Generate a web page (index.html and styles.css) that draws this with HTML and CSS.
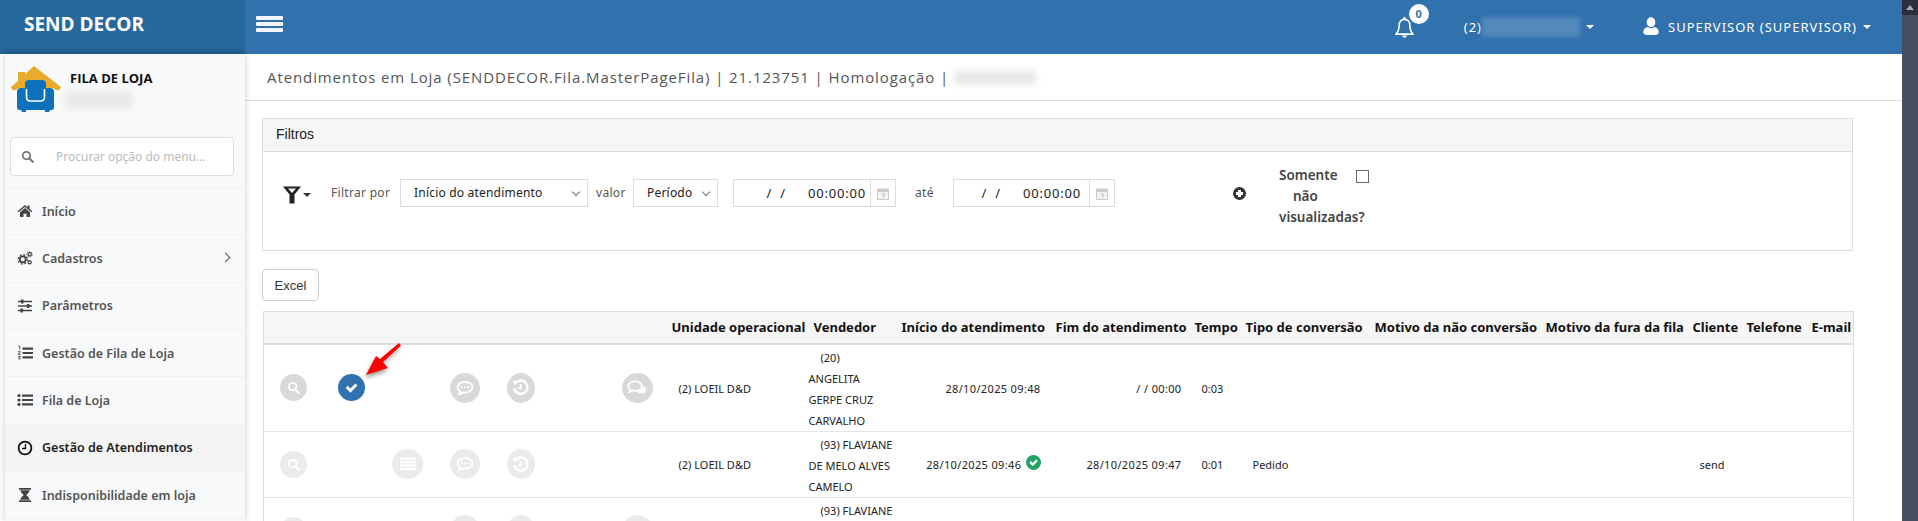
FILE: index.html
```html
<!DOCTYPE html>
<html lang="pt-BR">
<head>
<meta charset="utf-8">
<title>Atendimentos em Loja</title>
<link rel="stylesheet" href="styles.css">
</head>
<body>
<svg class="defs" width="0" height="0" aria-hidden="true">
  <symbol id="i-search" viewBox="0 0 16 16"><circle cx="6.8" cy="6.8" r="4.6" fill="none" stroke="currentColor" stroke-width="2.2"/><path d="M10.2 10.2L14.4 14.4" stroke="currentColor" stroke-width="2.8" stroke-linecap="round"/></symbol>
  <symbol id="i-check" viewBox="0 0 16 16"><path d="M1.800 8.400l2.200-2.200 2.900 2.900 5.200-5.400 2.200 2.200-7.400 7.600z" fill="currentColor"/></symbol>
  <symbol id="i-list" viewBox="0 0 16 16"><path d="M0 1.500h16v2.500H0zM0 4.900h16v2.500H0zM0 8.300h16v2.500H0zM0 11.700h16v2.500H0z" fill="currentColor"/><path d="M4.500 1.500v12.700" stroke="#ebebeb" stroke-width=".8"/></symbol>
  <symbol id="i-chat" viewBox="0 0 18 16"><path d="M9 2C4.800 2 1.600 4.400 1.600 7.300c0 1.800 1.200 3.300 3 4.300-.2 1-.8 1.900-1.400 2.600 1.500-.2 2.900-.9 3.900-1.800.6.1 1.200.2 1.900.2 4.200 0 7.400-2.400 7.400-5.300S13.200 2 9 2z" fill="none" stroke="currentColor" stroke-width="1.800"/><circle cx="5.800" cy="7.300" r="1.100" fill="currentColor"/><circle cx="9" cy="7.300" r="1.100" fill="currentColor"/><circle cx="12.200" cy="7.300" r="1.100" fill="currentColor"/></symbol>
  <symbol id="i-history" viewBox="0 0 16 16"><path d="M3.300 3.800A6.300 6.300 0 1 1 2 8.700" fill="none" stroke="currentColor" stroke-width="2.200"/><path d="M1 1.600l5 .4-3.800 4.200z" fill="currentColor"/><path d="M8.300 4.800v4H5.500" fill="none" stroke="currentColor" stroke-width="1.800"/></symbol>
  <symbol id="i-comments" viewBox="0 0 18 16"><path d="M7.200 2C3.800 2 1 3.900 1 6.300c0 1.300.8 2.500 2.100 3.300-.2.700-.5 1.300-1 1.800 1.100-.2 2-.6 2.800-1.200.7.200 1.500.3 2.300.3 3.400 0 6.200-1.900 6.200-4.200S10.600 2 7.200 2z" fill="none" stroke="currentColor" stroke-width="1.600"/><path d="M15 6c1.300.8 2.200 2 2.200 3.400 0 1.100-.6 2-1.600 2.700.1.500.4 1.100.8 1.500-.9-.1-1.700-.5-2.400-1-.5.100-1.100.2-1.700.2-1.700 0-3.300-.6-4.200-1.600 3.800-.1 6.400-2.300 6.900-5.200z" fill="currentColor"/></symbol>
  <symbol id="i-home" viewBox="0 0 16 16"><path d="M8 2L.6 8.200l.9 1.100L8 3.900l6.500 5.400.9-1.100-2.800-2.400V2.500h-2v2.100z" fill="currentColor"/><path d="M3 9.300L8 5.100l5 4.200v4.700H9.500v-3.200h-3V14H3z" fill="currentColor"/></symbol>
  <symbol id="i-cogs" viewBox="0 0 18 16"><circle cx="6.500" cy="9.500" r="3.400" fill="none" stroke="currentColor" stroke-width="2"/><circle cx="6.500" cy="9.500" r="5.200" fill="none" stroke="currentColor" stroke-width="1.600" stroke-dasharray="2 2.100"/><circle cx="14.200" cy="3.800" r="1.800" fill="none" stroke="currentColor" stroke-width="1.400"/><circle cx="14.200" cy="3.800" r="3" fill="none" stroke="currentColor" stroke-width="1.100" stroke-dasharray="1.300 1.300"/><circle cx="14.200" cy="12.800" r="1.800" fill="none" stroke="currentColor" stroke-width="1.400"/></symbol>
  <symbol id="i-sliders" viewBox="0 0 16 16"><path d="M1 3.500h14M1 8h14M1 12.500h14" stroke="currentColor" stroke-width="1.300"/><path d="M4 1.500h2.500v4H4zM10 6h2.500v4H10zM3.500 10.500H6v4H3.500z" fill="currentColor"/></symbol>
  <symbol id="i-list-ol" viewBox="0 0 16 16"><path d="M5.500 2.500H16v2.200H5.500zM5.500 6.900H16v2.200H5.500zM5.500 11.300H16v2.200H5.500z" fill="currentColor"/><path d="M1.300 1.200h1.500v3.400M1 6.700h2.400L1.200 9.400h2.500M1 11.600h2.500l-1 1 1 1.200H1" fill="none" stroke="currentColor" stroke-width=".9"/></symbol>
  <symbol id="i-list-ul" viewBox="0 0 16 16"><path d="M5 2.500h11v2.200H5zM5 6.900h11v2.200H5zM5 11.300h11v2.200H5z" fill="currentColor"/><circle cx="2" cy="3.600" r="1.600" fill="currentColor"/><circle cx="2" cy="8" r="1.600" fill="currentColor"/><circle cx="2" cy="12.400" r="1.600" fill="currentColor"/></symbol>
  <symbol id="i-clock" viewBox="0 0 16 16"><circle cx="8" cy="8" r="6.400" fill="none" stroke="currentColor" stroke-width="1.800"/><path d="M8.500 3.800v4.700H5" fill="none" stroke="currentColor" stroke-width="1.400"/></symbol>
  <symbol id="i-hourglass" viewBox="0 0 16 16"><path d="M2 1h12v1.800H2zM2 13.200h12V15H2zM3.500 3.200h9C12.500 6 9.800 7 9.400 8c.4 1 3.100 2 3.100 4.800h-9C3.500 10 6.200 9 6.600 8c-.4-1-3.100-2-3.100-4.800z" fill="currentColor"/></symbol>
  <symbol id="i-bell" viewBox="0 0 22 24"><path d="M11 3.500c-3.600 0-5.600 2.700-5.600 6 0 5-1.300 7.500-3.400 9.500h18c-2.100-2-3.400-4.500-3.400-9.500 0-3.300-2-6-5.600-6z" fill="none" stroke="currentColor" stroke-width="1.700" stroke-linejoin="round"/><path d="M8.200 20.500a2.900 2.900 0 0 0 5.600 0z" fill="currentColor"/><circle cx="11" cy="2.500" r="1.500" fill="currentColor"/></symbol>
  <symbol id="i-user" viewBox="0 0 16 18"><ellipse cx="8" cy="5.200" rx="4.300" ry="5"/><path d="M.3 15c0-3 2.200-4.800 4.700-5 .9.800 1.900 1.200 3 1.200s2.100-.4 3-1.200c2.500.2 4.700 2 4.700 5 0 1.900-1.500 3-3.500 3H3.800C1.800 18 .3 16.900.3 15z"/></symbol>
  <symbol id="i-filter" viewBox="0 0 18 18"><path d="M0 .5h18l-6.500 8v9h-5v-9z" fill="currentColor"/><path d="M5 2.500h8L9 7z" fill="#fff"/></symbol>
  <symbol id="i-calendar" viewBox="0 0 12 13"><path d="M.5 2h11v10.500H.5z" fill="#f3f3f3" stroke="#ccc"/><path d="M.5 2h11v3H.5z" fill="#ccc"/><path d="M4.500 7h3l-1.500 4" fill="none" stroke="#bbb"/></symbol>
</svg>

<div class="screen">
  <div class="page">
    <header class="topbar">
      <div class="brand">SEND DECOR</div>
      <div class="burger"><i></i><i></i><i></i></div>
      <div class="top-right">
        <div class="bell"><svg class="bell-ico"><use href="#i-bell"/></svg><span class="badge">0</span></div>
        <div class="unit">(2)<span class="blur-top"></span><b class="caret"></b></div>
        <div class="user"><svg class="user-ico" fill="currentColor"><use href="#i-user"/></svg>SUPERVISOR (SUPERVISOR)<b class="caret"></b></div>
      </div>
    </header>
    <div class="content">
      <aside class="sidebar">
        <div class="profile">
          <svg class="logo" viewBox="0 0 50 50">
            <path d="M23 2L50 23Q49 27 45 26L42 24H8L5 26Q1 27 0 23L7 17V8H14V10Z" fill="#e8ab2b"/>
            <rect x="6" y="24" width="10" height="22" rx="4" fill="#0d72b9"/>
            <rect x="32" y="24" width="11" height="22" rx="4" fill="#0d72b9"/>
            <rect x="6" y="36" width="37" height="10" rx="3" fill="#0d72b9"/>
            <path d="M10 46h5v2h-4zM34 46h5l-1 2h-4z" fill="#0d72b9"/>
            <rect x="14" y="16" width="21" height="20" rx="4" fill="#0d72b9"/>
            <path d="M15.500 25v8q0 4 4 4h10q4 0 4-4v-8" fill="none" stroke="#fff" stroke-width="1.600"/>
          </svg>
          <div class="profile-text">
            <div class="profile-title">FILA DE LOJA</div>
            <div class="blur-side"></div>
          </div>
        </div>
        <div class="search"><svg class="search-ico"><use href="#i-search"/></svg><span class="search-ph">Procurar opção do menu...</span></div>
        <nav class="menu">
          <a class="item"><svg class="mi"><use href="#i-home"/></svg>Início</a>
          <a class="item"><svg class="mi"><use href="#i-cogs"/></svg>Cadastros<span class="chev"></span></a>
          <a class="item"><svg class="mi"><use href="#i-sliders"/></svg>Parâmetros</a>
          <a class="item"><svg class="mi"><use href="#i-list-ol"/></svg>Gestão de Fila de Loja</a>
          <a class="item"><svg class="mi"><use href="#i-list-ul"/></svg>Fila de Loja</a>
          <a class="item active"><svg class="mi"><use href="#i-clock"/></svg>Gestão de Atendimentos</a>
          <a class="item"><svg class="mi"><use href="#i-hourglass"/></svg>Indisponibilidade em loja</a>
        </nav>
      </aside>
      <main class="main">
        <div class="title">Atendimentos em Loja (SENDDECOR.Fila.MasterPageFila) | 21.123751 | Homologação | <span class="blur-title"></span></div>
        <div class="body">
          <section class="panel">
            <div class="panel-head">Filtros</div>
            <div class="panel-body">
              <span class="funnel"><svg class="funnel-ico"><use href="#i-filter"/></svg><b class="caret dark"></b></span>
              <label class="lbl l-filtrar">Filtrar por</label>
              <div class="sel s-campo">Início do atendimento<span class="sel-chev"></span></div>
              <label class="lbl l-valor">valor</label>
              <div class="sel s-periodo">Período<span class="sel-chev"></span></div>
              <div class="date d-1"><span class="date-val"><span class="slashes">/&nbsp;&nbsp;/</span>00:00:00</span><span class="addon"><svg class="cal"><use href="#i-calendar"/></svg></span></div>
              <label class="lbl l-ate">até</label>
              <div class="date d-2"><span class="date-val"><span class="slashes">/&nbsp;&nbsp;/</span>00:00:00</span><span class="addon"><svg class="cal"><use href="#i-calendar"/></svg></span></div>
              <span class="plus"></span>
              <div class="only">
                <div class="only-text"><span class="ind">Somente</span><br><span class="ind2">não</span><br>visualizadas?</div>
                <span class="checkbox"></span>
              </div>
            </div>
          </section>
          <button class="excel">Excel</button>
          <div class="table-wrap">
            <table class="grid">
              <colgroup>
                <col class="c-a"><col class="c-b"><col class="c-c"><col class="c-d"><col class="c-e"><col class="c-f"><col class="c-g">
                <col class="c-un"><col class="c-ve"><col class="c-in"><col class="c-fi"><col class="c-te"><col class="c-ti"><col class="c-mo"><col class="c-fu"><col class="c-cl"><col class="c-fo"><col class="c-em">
              </colgroup>
              <thead>
                <tr><th></th><th></th><th></th><th></th><th></th><th></th><th></th>
                  <th>Unidade operacional</th><th class="th-ve">Vendedor</th><th>Início do atendimento</th><th>Fim do atendimento</th><th>Tempo</th><th>Tipo de conversão</th><th>Motivo da não conversão</th><th>Motivo da fura da fila</th><th>Cliente</th><th>Telefone</th><th>E-mail</th></tr>
              </thead>
              <tbody>
                <tr class="r-1">
                  <td class="ic"><span class="cb c27"><svg class="g13"><use href="#i-search"/></svg></span></td>
                  <td class="ic"><span class="cb c27 blue"><svg class="g15"><use href="#i-check"/></svg></span>
                    <svg class="arrow" viewBox="0 0 44 40"><path d="M39 1L41 3.500 23 20 28 26 6 33 16 14 20 17z" fill="#f00"/></svg></td>
                  <td class="ic"></td>
                  <td class="ic"><span class="cb c30"><svg class="g18"><use href="#i-chat"/></svg></span></td>
                  <td class="ic"><span class="cb c29"><svg class="g17"><use href="#i-history"/></svg></span></td>
                  <td class="ic"></td>
                  <td class="ic"><span class="cb c31"><svg class="g20"><use href="#i-comments"/></svg></span></td>
                  <td class="pl">(2) LOEIL D&amp;D</td>
                  <td class="ven">(20)<br>ANGELITA<br>GERPE CRUZ<br>CARVALHO</td>
                  <td class="rt">28/10/2025 09:48</td>
                  <td class="rt rt2">/ / 00:00</td>
                  <td class="pl2">0:03</td>
                  <td class="pl2"></td><td></td><td></td><td></td><td></td><td></td>
                </tr>
                <tr class="r-2">
                  <td class="ic"><span class="cb c27"><svg class="g13"><use href="#i-search"/></svg></span></td>
                  <td class="ic"></td>
                  <td class="ic"><span class="cb c31"><svg class="g18"><use href="#i-list"/></svg></span></td>
                  <td class="ic"><span class="cb c30"><svg class="g18"><use href="#i-chat"/></svg></span></td>
                  <td class="ic"><span class="cb c29"><svg class="g17"><use href="#i-history"/></svg></span></td>
                  <td class="ic"></td><td class="ic"></td>
                  <td class="pl">(2) LOEIL D&amp;D</td>
                  <td class="ven">(93) FLAVIANE<br>DE MELO ALVES<br>CAMELO</td>
                  <td class="rt">28/10/2025 09:46 <svg class="ok" viewBox="0 0 16 16"><circle cx="8" cy="8" r="8" fill="#1fa463"/><path d="M3.500 8.300l1.800-1.800 1.900 1.900 3.700-3.800 1.800 1.800-5.500 5.600z" fill="#fff"/></svg></td>
                  <td class="rt rt2">28/10/2025 09:47</td>
                  <td class="pl2">0:01</td>
                  <td class="pl2">Pedido</td><td></td><td></td><td class="pl2">send</td><td></td><td></td>
                </tr>
                <tr class="r-2">
                  <td class="ic"><span class="cb c27"><svg class="g13"><use href="#i-search"/></svg></span></td>
                  <td class="ic"></td><td class="ic"></td>
                  <td class="ic"><span class="cb c30"><svg class="g18"><use href="#i-chat"/></svg></span></td>
                  <td class="ic"><span class="cb c29"><svg class="g17"><use href="#i-history"/></svg></span></td>
                  <td class="ic"></td>
                  <td class="ic"><span class="cb c31"><svg class="g20"><use href="#i-comments"/></svg></span></td>
                  <td></td>
                  <td class="ven ven-top">(93) FLAVIANE</td>
                  <td></td><td></td><td></td><td></td><td></td><td></td><td></td><td></td><td></td>
                </tr>
              </tbody>
            </table>
          </div>
        </div>
      </main>
    </div>
  </div>
  <div class="scrollbar"><span class="sb-up"></span><span class="sb-thumb"></span></div>
</div>
</body>
</html>
```

FILE: styles.css
```css
* { box-sizing: border-box; }
html, body { margin: 0; height: 521px; overflow: hidden; background: #fff; }
body { font-family: "Noto Sans", "Open Sans", "Liberation Sans", sans-serif; font-size: 12px; color: #333; }
.defs { position: absolute; }
.screen { display: flex; height: 521px; overflow: hidden; }
.page { flex: 1; min-width: 0; display: flex; flex-direction: column; }

/* scrollbar */
.scrollbar { width: 16px; background: #2a2e3d; display: flex; flex-direction: column; align-items: center; }
.sb-up { width: 0; height: 0; margin: 5px 0 5px; border: 4px solid transparent; border-top: 0; border-bottom: 5px solid #a8abb3; }
.sb-thumb { width: 16px; flex: 1; background: #484d60; }

/* top bar */
.topbar { height: 54px; flex: none; display: flex; align-items: center; background: #3071ae; color: #fff; }
.brand { width: 245px; height: 54px; padding: 12px 0 0 24px; font-family: "Open Sans", sans-serif; font-weight: 700; font-size: 19px; line-height: 24px; background: linear-gradient(#27689f 85%, #23608f); }
.burger { margin-left: 11px; width: 27px; display: flex; flex-direction: column; gap: 2px; margin-top: -7px; }
.burger i { height: 4px; background: #f2f5f9; border-radius: 1px; }
.top-right { margin-left: auto; display: flex; align-items: center; padding-right: 31px; font-size: 13px; letter-spacing: 1px; }
.bell { position: relative; width: 21px; height: 22px; margin-top: -1px; }
.bell-ico { width: 21px; height: 23px; color: #fff; }
.badge { position: absolute; left: 15px; top: -12px; width: 20px; height: 20px; border-radius: 50%; background: #fff; color: #3071ae; font-weight: 700; font-size: 11px; line-height: 20px; text-align: center; letter-spacing: 0; }
.unit { margin-left: 49px; display: flex; align-items: center; }
.blur-top { width: 98px; height: 20px; background: #5389bb; filter: blur(2px); }
.caret { display: inline-block; width: 0; height: 0; margin-left: 6px; border: 4px solid transparent; border-bottom: 0; border-top: 4px solid #fff; }
.caret.dark { border-top-color: #333; margin-left: 2px; }
.user { margin-left: 49px; display: flex; align-items: center; }
.user-ico { width: 16px; height: 18px; margin-right: 9px; margin-top: -2px; color: #fff; }

.content { flex: 1; min-height: 0; display: flex; }

/* sidebar */
.sidebar { width: 240px; margin-left: 5px; flex: none; background: #f8f9fb; box-shadow: 0 0 7px rgba(0,0,0,.2); position: relative; }
.profile { height: 83px; display: flex; padding: 10px 0 0 6px; }
.logo { width: 50px; height: 50px; flex: none; }
.profile-text { margin-left: 9px; }
.profile-title { font-family: "Open Sans", sans-serif; font-weight: 700; font-size: 13px; color: #111; line-height: 18px; margin-top: 5px; }
.blur-side { width: 66px; height: 18px; margin: 4px 0 0 -4px; background: #e6e7e9; filter: blur(3px); }
.search { margin-left: 5px; width: 224px; height: 39px; border: 1px solid #ddd; border-radius: 4px; background: #fff; display: flex; align-items: center; padding-left: 10px; }
.search-ico { width: 13px; height: 13px; color: #777; }
.search-ph { margin-left: 22px; color: #bcbcbc; font-size: 12px; }
.menu { margin-top: 11px; border-top: 1px solid #eef0f2; }
.item { height: 47.330px; display: flex; align-items: center; padding-left: 12px; border-bottom: 1px solid #eef0f2; color: #555; font-weight: 600; font-size: 12.500px; position: relative; }
.mi { width: 16px; height: 16px; margin-right: 9px; color: #444; }
.item.active { background: #f4f4f4; color: #222; }
.item.active .mi { color: #111; }
.chev { position: absolute; right: 16px; top: 19px; width: 7px; height: 7px; border-top: 1px solid #555; border-right: 1px solid #555; transform: rotate(45deg); }

/* main */
.main { flex: 1; min-width: 0; }
.title { height: 47px; border-bottom: 1px solid #ddd; padding: 12px 0 0 22px; font-family: "Open Sans", sans-serif; font-size: 15px; line-height: 22px; color: #555; letter-spacing: .9px; white-space: nowrap; }
.blur-title { display: inline-block; width: 82px; height: 14px; vertical-align: -2px; background: #e8e8e8; filter: blur(3px); }
.body { padding: 17px 49px 0 17px; }
.panel { border: 1px solid #ddd; height: 133px; }
.panel-head { height: 33px; background: #f6f6f6; border-bottom: 1px solid #ddd; font-family: "Liberation Sans", sans-serif; font-size: 14px; line-height: 30px; padding-left: 13px; color: #222; }
.panel-body { display: flex; align-items: flex-start; padding: 27px 0 0 20px; }
.funnel { display: flex; align-items: center; margin-top: 7px; width: 48px; }
.funnel-ico { width: 18px; height: 18px; color: #222; }
.lbl { line-height: 28px; color: #555; font-size: 12px; letter-spacing: .3px; }
.l-filtrar { width: 69px; }
.sel { height: 28px; border: 1px solid #ddd; line-height: 26px; padding-left: 13px; color: #222; font-size: 12px; letter-spacing: .2px; position: relative; }
.sel-chev { position: absolute; right: 8px; top: 9px; width: 6px; height: 6px; border-right: 1px solid #777; border-bottom: 1px solid #777; transform: rotate(45deg); }
.s-campo { width: 188px; }
.l-valor { margin-left: 8px; width: 37px; }
.s-periodo { width: 85px; }
.date { height: 28px; border: 1px solid #ddd; display: flex; color: #222; }
.d-1 { margin-left: 15px; width: 163px; }
.d-2 { width: 162px; }
.date-val { flex: 1; line-height: 26px; text-align: right; padding-right: 4px; letter-spacing: .8px; font-size: 13px; white-space: nowrap; }
.d-2 .date-val { padding-right: 8px; }
.slashes { margin-right: 22px; }
.addon { width: 25px; flex: none; border-left: 1px solid #ddd; display: flex; align-items: center; justify-content: center; }
.cal { width: 12px; height: 13px; }
.l-ate { margin-left: 19px; width: 38px; }
.plus { width: 13px; height: 13px; margin: 8px 0 0 118px; border-radius: 50%; background: #333; position: relative; }
.plus::before, .plus::after { content: ""; position: absolute; background: #fff; }
.plus::before { left: 3px; top: 5px; width: 7px; height: 3px; }
.plus::after { left: 5px; top: 3px; width: 3px; height: 7px; }
.only { display: flex; margin: -14px 0 0 33px; }
.only-text { width: 77px; white-space: nowrap; font-weight: 600; font-size: 13.500px; line-height: 21px; color: #444; }
.ind2 { margin-left: 14px; }
.checkbox { width: 13px; height: 13px; border: 1px solid #666; margin-top: 5px; background: #fff; }
.excel { display: block; margin-top: 18px; width: 57px; height: 32px; padding: 0; background: #fff; border: 1px solid #ccc; border-radius: 4px; font-family: "Liberation Sans", sans-serif; font-size: 13px; color: #333; }

/* table */
.table-wrap { margin: 10px 0 0 1px; }
.grid { width: 1590px; table-layout: fixed; border-collapse: collapse; border-left: 1px solid #ddd; border-right: 1px solid #ddd; border-top: 1px solid #ddd; font-size: 11px; color: #222; }
.c-a { width: 60px; } .c-b { width: 56px; } .c-c { width: 56px; } .c-d { width: 58px; } .c-e { width: 54px; } .c-f { width: 59px; } .c-g { width: 61px; }
.c-un { width: 141px; } .c-ve { width: 89px; } .c-in { width: 154px; } .c-fi { width: 139px; } .c-te { width: 51px; } .c-ti { width: 129px; } .c-mo { width: 171px; } .c-fu { width: 147px; } .c-cl { width: 54px; } .c-fo { width: 65px; } .c-em { width: 46px; }
.grid th { height: 32px; background: #f6f6f6; border-bottom: 2px solid #ddd; padding: 0 0 0 4px; font-weight: 700; font-size: 13px; color: #111; white-space: nowrap; text-align: left; overflow: hidden; }
.grid th.th-ve { padding-left: 5px; }
.grid td { border-bottom: 1px solid #e6e6e6; padding: 1px 0 0; line-height: 21px; vertical-align: middle; position: relative; }
.r-1 td { height: 87px; }
.r-2 td { height: 66px; }
.grid td.ic { text-align: center; padding-top: 0; }
.grid td.pl { padding-left: 11px; }
.grid td.pl2 { padding-left: 11px; }
.grid td.rt { text-align: right; padding-right: 11px; letter-spacing: .35px; }
.grid td.rt2 { padding-right: 9px; }
.grid td.ven { padding-top: 2px; text-indent: 12px; white-space: nowrap; }
.grid td.ven-top { vertical-align: top; }
.cb { display: inline-flex; align-items: center; justify-content: center; border-radius: 50%; background: #d9d9d9; color: #fff; vertical-align: middle; }
.r-2 .cb { background: #ebebeb; }
.cb.blue { background: #3071ae; }
.c27 { width: 27px; height: 27px; } .c29 { width: 28px; height: 30px; } .c30 { width: 30px; height: 30px; } .c31 { width: 31px; height: 30px; }
.g13 { width: 13px; height: 13px; } .g15 { width: 15px; height: 15px; } .g17 { width: 17px; height: 17px; } .g18 { width: 18px; height: 16px; } .g20 { width: 20px; height: 18px; }
.ok { width: 15px; height: 15px; vertical-align: -1px; margin-left: 1px; }
.arrow { position: absolute; left: 36px; top: -3px; width: 44px; height: 40px; filter: drop-shadow(-1px 3px 2px rgba(0,0,0,.4)); }
```
